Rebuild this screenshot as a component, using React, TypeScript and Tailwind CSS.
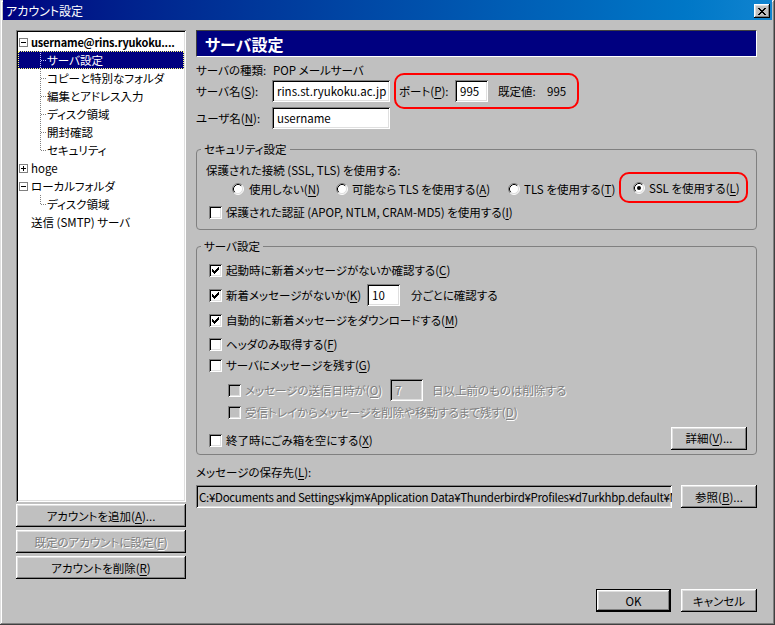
import type { ReactNode } from 'react'

const raised =
  'shadow-[inset_-1px_-1px_#000,inset_1px_1px_#fff,inset_-2px_-2px_#808080,inset_2px_2px_#dfdfdf]'
const sunken =
  'shadow-[inset_1px_1px_#808080,inset_-1px_-1px_#fff,inset_2px_2px_#000,inset_-2px_-2px_#dfdfdf]'
const grayed = 'text-[#808080] [text-shadow:1px_1px_0_#fff]'

type TreeRow = {
  label: string
  depth: 0 | 1
  toggle?: 'open' | 'closed'
  bold?: boolean
  selected?: boolean
  last?: boolean
}

const tree: TreeRow[] = [
  { label: 'username@rins.ryukoku....', depth: 0, toggle: 'open', bold: true },
  { label: 'サーバ設定', depth: 1, selected: true },
  { label: 'コピーと特別なフォルダ', depth: 1 },
  { label: '編集とアドレス入力', depth: 1 },
  { label: 'ディスク領域', depth: 1 },
  { label: '開封確認', depth: 1 },
  { label: 'セキュリティ', depth: 1, last: true },
  { label: 'hoge', depth: 0, toggle: 'closed' },
  { label: 'ローカルフォルダ', depth: 0, toggle: 'open' },
  { label: 'ディスク領域', depth: 1, last: true },
  { label: '送信 (SMTP) サーバ', depth: 0 },
]

function Key({ children }: { children: ReactNode }) {
  return <span className="underline underline-offset-[2px]">{children}</span>
}

function Toggle({ open }: { open: boolean }) {
  return (
    <svg width="9" height="9" viewBox="0 0 9 9" className="shrink-0">
      <rect x="0.5" y="0.5" width="8" height="8" fill="#fff" stroke="#808080" />
      <path d="M2 4.5h5" stroke="#000" />
      {!open ? <path d="M4.5 2v5" stroke="#000" /> : null}
    </svg>
  )
}

function Connector({ last, light }: { last?: boolean; light?: boolean }) {
  const color = light ? '#c0c0ff' : '#808080'
  return (
    <svg width="7" height="18" viewBox="0 0 7 18" className="shrink-0">
      <path d={last ? 'M0.5 0v9' : 'M0.5 0v18'} stroke={color} strokeDasharray="1 1" />
      <path d="M1 9.5h5" stroke={color} strokeDasharray="1 1" />
    </svg>
  )
}

function Button({
  children,
  width,
  disabled,
  primary,
}: {
  children: ReactNode
  width: string
  disabled?: boolean
  primary?: boolean
}) {
  return (
    <button
      type="button"
      className={`flex h-[23px] ${width} shrink-0 items-center justify-center bg-[#c0c0c0] text-[11.5px] ${
        primary ? 'border border-black' : ''
      } ${raised} ${disabled ? grayed : 'text-black'}`}
    >
      {children}
    </button>
  )
}

function Checkbox({ checked, disabled }: { checked?: boolean; disabled?: boolean }) {
  return (
    <span
      className={`flex size-[13px] shrink-0 items-center justify-center ${sunken} ${
        disabled ? 'bg-[#c0c0c0]' : 'bg-white'
      }`}
    >
      {checked ? (
        <svg width="7" height="7" viewBox="0 0 7 7">
          <path d="M0 2v3h1v1h1v1h1v-1h1v-1h1v-1h1v-1h1v-3h-1v1h-1v1h-1v1h-1v1h-1v-1h-1v-1z" fill="#000" />
        </svg>
      ) : null}
    </span>
  )
}

function Radio({ checked }: { checked?: boolean }) {
  return (
    <svg width="12" height="12" viewBox="0 0 12 12" className="shrink-0">
      <circle cx="6" cy="6" r="5" fill="#fff" />
      <path d="M2.11 9.89A5.5 5.5 0 0 1 9.89 2.11" fill="none" stroke="#808080" />
      <path d="M9.89 2.11A5.5 5.5 0 0 1 2.11 9.89" fill="none" stroke="#fff" />
      <path d="M2.82 9.18A4.5 4.5 0 0 1 9.18 2.82" fill="none" stroke="#000" />
      <path d="M9.18 2.82A4.5 4.5 0 0 1 2.82 9.18" fill="none" stroke="#dfdfdf" />
      {checked ? <circle cx="6" cy="6" r="2" fill="#000" /> : null}
    </svg>
  )
}

function CheckRow({
  checked,
  disabled,
  className = '',
  children,
}: {
  checked?: boolean
  disabled?: boolean
  className?: string
  children: ReactNode
}) {
  return (
    <div className={`flex h-[20px] items-center gap-[4px] whitespace-nowrap ${className}`}>
      <Checkbox checked={checked} disabled={disabled} />
      <div className={`flex items-center ${disabled ? grayed : ''}`}>{children}</div>
    </div>
  )
}

function Field({ value, width, disabled }: { value: string; width: string; disabled?: boolean }) {
  return (
    <div
      className={`flex h-[22px] ${width} shrink-0 items-center pl-[5px] ${sunken} ${
        disabled ? `bg-[#c0c0c0] ${grayed}` : 'bg-white'
      }`}
    >
      {value}
    </div>
  )
}

function Group({ title, children }: { title: string; children: ReactNode }) {
  return (
    <fieldset className="rounded-[4px] border border-[#808080]">
      <legend className="ml-[4px] px-[3px] leading-[14px]">{title}</legend>
      {children}
    </fieldset>
  )
}

export default function App() {
  return (
    <div className="h-[625px] w-[775px] overflow-hidden bg-[#c0c0c0] px-[3px] text-[11.5px] leading-[16px] text-black shadow-[inset_-1px_-1px_#404040,inset_1px_1px_#dfdfdf,inset_-2px_-2px_#808080,inset_2px_2px_#fff] [font-family:'Noto_Sans_CJK_JP',sans-serif] [font-feature-settings:'palt']">
      {/* title bar */}
      <div className="flex h-[20px] items-start justify-between bg-linear-to-r from-[#000080] to-[#1084d0] pt-[4px] pr-[2px] pl-[3px]">
        <span className="text-[12px] leading-[14px] text-white">アカウント設定</span>
        <button
          type="button"
          className={`flex h-[14px] w-[16px] items-center justify-center bg-[#c0c0c0] ${raised}`}
          aria-label="閉じる"
        >
          <svg width="8" height="7" viewBox="0 0 8 7">
            <path
              d="M0 0h2v1h1v1h2v-1h1v-1h2v1h-1v1h-1v1h-1v1h1v1h1v1h1v1h-2v-1h-1v-1h-2v1h-1v1h-2v-1h1v-1h1v-1h1v-1h-1v-1h-1v-1h-1z"
              fill="#000"
            />
          </svg>
        </button>
      </div>

      <div className="mt-[10px] flex gap-[10px] pl-[13px]">
        {/* account tree */}
        <div className="flex w-[170px] flex-col">
          <div className={`h-[472px] overflow-hidden bg-white p-[2px] pt-[3px] ${sunken}`}>
            {tree.map((row, i) => (
              <div
                key={i}
                className={`flex h-[18px] items-center whitespace-nowrap ${
                  row.selected
                    ? 'bg-[#000080] text-white outline-1 -outline-offset-1 outline-dotted outline-[#ffff80]'
                    : ''
                } ${row.depth === 1 ? 'pl-[22px]' : row.toggle ? 'pl-[1px]' : 'pl-[13px]'}`}
              >
                {row.depth === 1 ? <Connector last={row.last} light={row.selected} /> : null}
                {row.toggle ? <Toggle open={row.toggle === 'open'} /> : null}
                <span
                  className={`${row.toggle ? 'ml-[3px]' : ''} ${
                    row.bold ? 'text-[11px] font-bold tracking-[-0.2px]' : ''
                  }`}
                >
                  {row.label}
                </span>
              </div>
            ))}
          </div>
          <div className="mt-[2px] flex flex-col gap-[3px]">
            <Button width="w-[170px]">
              アカウントを追加(<Key>A</Key>)...
            </Button>
            <Button width="w-[170px]" disabled>
              既定のアカウントに設定(<Key>F</Key>)
            </Button>
            <Button width="w-[170px]">
              アカウントを削除(<Key>R</Key>)
            </Button>
          </div>
        </div>

        {/* settings panel */}
        <div className="flex w-[561px] flex-col">
          <div className="flex h-[27px] items-center border border-white border-t-[#404040] border-l-[#404040] bg-[#000080] pl-[8px] text-[16px] font-bold text-white">
            サーバ設定
          </div>

          <div className="mt-[5px] flex h-[16px] items-center">
            <span className="w-[77px]">サーバの種類:</span>
            <span>POP メールサーバ</span>
          </div>

          <div className="mt-[2px] flex h-[22px] items-center">
            <span className="w-[76px] whitespace-nowrap">
              サーバ名(<Key>S</Key>):
            </span>
            <Field value="rins.st.ryukoku.ac.jp" width="w-[118px]" />
            <div className="-my-[7px] ml-[4px] flex h-[36px] w-[185px] items-center rounded-[10px] border-2 border-[#ff0000] pl-[3px]">
              <span className="w-[56px] whitespace-nowrap">
                ポート(<Key>P</Key>):
              </span>
              <Field value="995" width="w-[33px]" />
              <span className="ml-[10px] w-[49px]">既定値:</span>
              <span>995</span>
            </div>
          </div>

          <div className="mt-[5px] flex h-[22px] items-center">
            <span className="w-[76px] whitespace-nowrap">
              ユーザ名(<Key>N</Key>):
            </span>
            <Field value="username" width="w-[118px]" />
          </div>

          <div className="mt-[13px]">
            <Group title="セキュリティ設定">
              <div className="pt-[6px] pb-[7px] pl-[9px]">
                <div className="h-[16px]">保護された接続 (SSL, TLS) を使用する:</div>
                <div className="mt-[3px] ml-[26px] flex h-[16px] items-center whitespace-nowrap">
                  <div className="flex w-[104px] items-center gap-[5px]">
                    <Radio />
                    <span>
                      使用しない(<Key>N</Key>)
                    </span>
                  </div>
                  <div className="flex w-[172px] items-center gap-[4px]">
                    <Radio />
                    <span>
                      可能なら TLS を使用する(<Key>A</Key>)
                    </span>
                  </div>
                  <div className="flex w-[111px] items-center gap-[4px]">
                    <Radio />
                    <span>
                      TLS を使用する(<Key>T</Key>)
                    </span>
                  </div>
                  <div className="-mt-[9px] -mb-[6px] flex h-[31px] w-[129px] items-center gap-[4px] rounded-[10px] border-2 border-[#ff0000] pl-[12px]">
                    <Radio checked />
                    <span>
                      SSL を使用する(<Key>L</Key>)
                    </span>
                  </div>
                </div>
                <CheckRow className="mt-[5px] ml-[3px]">
                  保護された認証 (APOP, NTLM, CRAM-MD5) を使用する(<Key>I</Key>)
                </CheckRow>
              </div>
            </Group>
          </div>

          <div className="mt-[9px]">
            <Group title="サーバ設定">
              <div className="pt-[7px] pr-[9px] pb-[5px] pl-[12px]">
                <CheckRow checked>
                  起動時に新着メッセージがないか確認する(<Key>C</Key>)
                </CheckRow>
                <div className="mt-[5px] flex h-[20px] items-center gap-[4px] whitespace-nowrap">
                  <Checkbox checked />
                  <span className="w-[137px]">
                    新着メッセージがないか(<Key>K</Key>)
                  </span>
                  <Field value="10" width="w-[33px]" />
                  <span className="ml-[7px]">分ごとに確認する</span>
                </div>
                <CheckRow checked className="mt-[5px]">
                  自動的に新着メッセージをダウンロードする(<Key>M</Key>)
                </CheckRow>
                <CheckRow className="mt-[4px]">
                  ヘッダのみ取得する(<Key>F</Key>)
                </CheckRow>
                <CheckRow className="mt-[1px]">
                  サーバにメッセージを残す(<Key>G</Key>)
                </CheckRow>
                <div className="mt-[5px] ml-[19px] flex h-[20px] items-center gap-[4px] whitespace-nowrap">
                  <Checkbox disabled />
                  <span className={`w-[141px] ${grayed}`}>
                    メッセージの送信日時が(<Key>O</Key>)
                  </span>
                  <Field value="7" width="w-[33px]" disabled />
                  <span className={`ml-[5px] ${grayed}`}>日以上前のものは削除する</span>
                </div>
                <CheckRow disabled className="mt-[2px] ml-[19px]">
                  受信トレイからメッセージを削除や移動するまで残す(<Key>D</Key>)
                </CheckRow>
                <div className="mt-[5px] flex h-[22px] items-center justify-between">
                  <CheckRow className="mt-[4px]">
                    終了時にごみ箱を空にする(<Key>X</Key>)
                  </CheckRow>
                  <Button width="w-[76px]">
                    詳細(<Key>V</Key>)...
                  </Button>
                </div>
              </div>
            </Group>
          </div>

          <div className="mt-[9px] h-[16px]">
            メッセージの保存先(<Key>L</Key>):
          </div>
          <div className="mt-[5px] flex h-[23px] gap-[9px]">
            <div
              className={`flex h-[23px] w-[476px] shrink-0 items-center overflow-hidden bg-[#c0c0c0] pl-[3px] ${sunken}`}
            >
              <span className="min-w-0 overflow-hidden tracking-[-0.3px] whitespace-nowrap">
                C:¥Documents and Settings¥kjm¥Application Data¥Thunderbird¥Profiles¥d7urkhbp.default¥M
              </span>
            </div>
            <Button width="w-[76px]">
              参照(<Key>B</Key>)...
            </Button>
          </div>

          <div className="mt-[81px] flex justify-end gap-[10px]">
            <Button width="w-[75px]" primary>
              OK
            </Button>
            <Button width="w-[76px]">キャンセル</Button>
          </div>
        </div>
      </div>
    </div>
  )
}
